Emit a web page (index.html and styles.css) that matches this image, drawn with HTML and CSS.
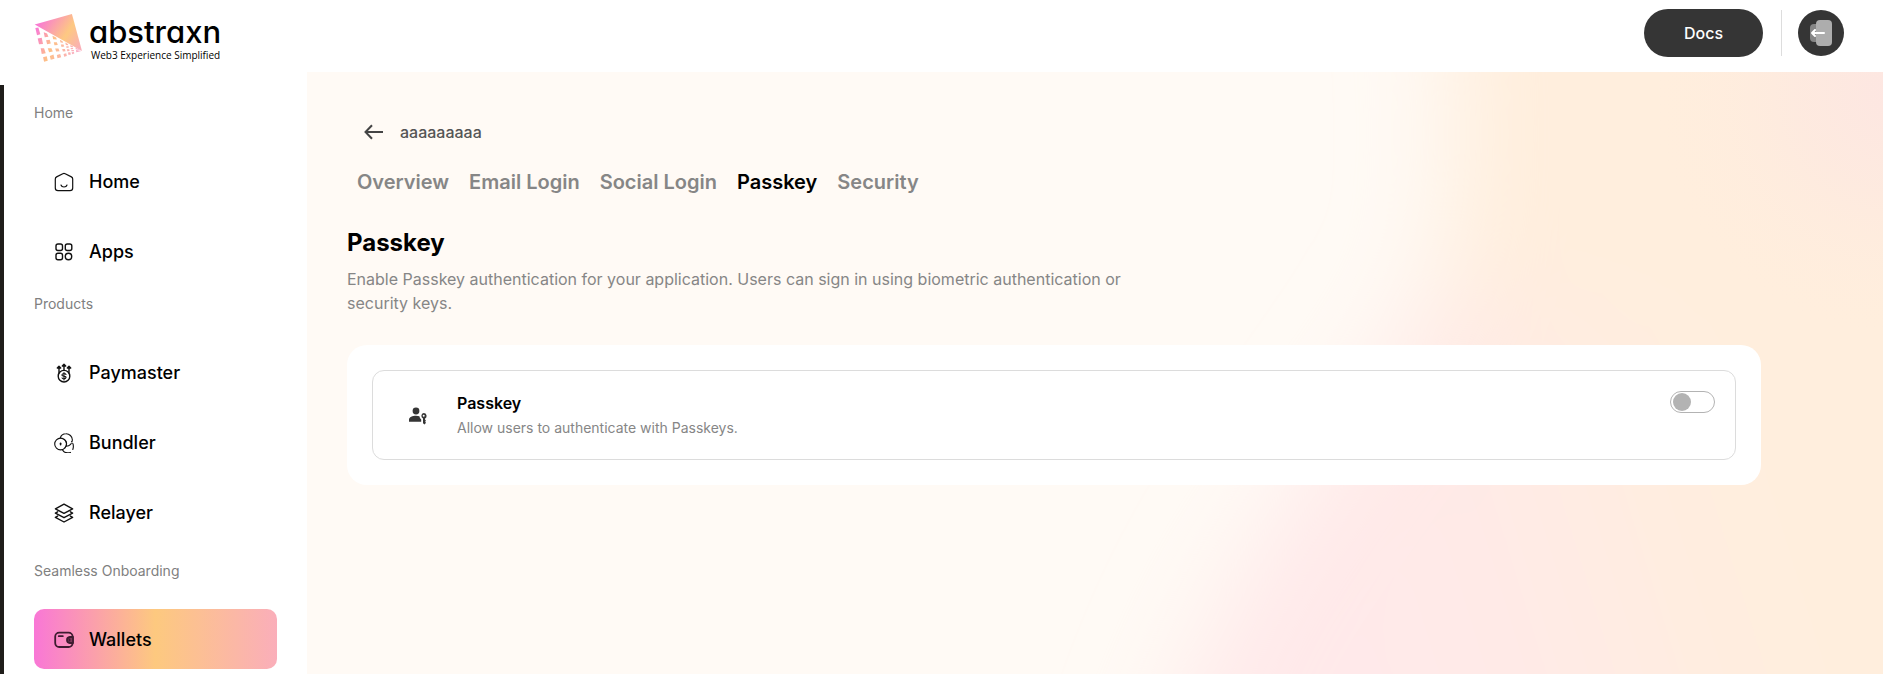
FILE: index.html
```html
<!DOCTYPE html>
<html lang="en">
<head>
    <meta charset="UTF-8">
    <meta name="viewport" content="width=device-width, initial-scale=1">
    <title>Abstraxn - Passkey</title>
    <link rel="stylesheet" href="styles.css">
</head>
<body>
<header class="header">
    <a href="#" class="logo">
        <svg class="logo-mark" viewBox="102 42 146 146" aria-hidden="true">
            <defs>
                <linearGradient id="mark-top" gradientUnits="userSpaceOnUse" x1="125" y1="60" x2="245" y2="140">
                    <stop offset="0" stop-color="#f97bd2"/>
                    <stop offset="0.6" stop-color="#fdc982"/>
                    <stop offset="1" stop-color="#faaeb8"/>
                </linearGradient>
                <linearGradient id="mark-grid" gradientUnits="userSpaceOnUse" x1="104" y1="100" x2="245" y2="150">
                    <stop offset="0" stop-color="#f97bd6"/>
                    <stop offset="0.4" stop-color="#fdc186"/>
                    <stop offset="1" stop-color="#f9a8cc"/>
                </linearGradient>
            </defs>
            <path fill="url(#mark-top)" d="M104 76 215 45l30 110z"/>
            <path fill="url(#mark-grid)" d="M106 87l9-2 6 20-10 3zM113 118l12-2 4 18-12 1zM122 147h10l5 15-12 2zM129 174l11-3 3 13-11 3zM131 99l10 4 4 10-11 1zM138 123l11-1 3 11-11 2zM143 147h11l4 10-11 2zM149 170l11-4 3 12-11 3zM157 110l11 5 2 6-11-1zM161 129h9l3 8-10 1zM165 148h10l3 8-10 1zM170 167l10-3 3 10-11 3zM179 122l8 4 2 5-8-1zM182 136h8l2 6-8 1zM186 149h8l2 7-8 1zM190 164l8-2 2 8-8 2zM195 130l8 4 1 4-7-1zM198 141h7l1 4-7 1zM200 150h7l1 5-7 1zM203 160l7-1 2 7-7 1zM210 137l8 4v3l-7-1zM211 146h7l1 3-7 1zM213 152h8v4h-7zM214 159l7-1 1 5-6 2zM226 145l15 8-15-3zM227 152l16 3-15 4z"/>
        </svg>
        <span class="logo-text">
            <span class="logo-name">abstraxn</span>
            <span class="logo-tagline">Web3 Experience Simplified</span>
        </span>
    </a>
    <div class="header-actions">
        <a href="#" class="docs-button">Docs</a>
        <span class="divider"></span>
        <button type="button" class="logout" aria-label="Log out">
            <svg width="24" height="26" viewBox="0 0 24 26" aria-hidden="true">
                <rect x="1" y="4" width="12" height="18" rx="4" fill="#858585"/>
                <rect x="7" y="0" width="16" height="26" rx="4" fill="#adadad"/>
                <path d="M15 13H3M6 10l-3 3 3 3" fill="none" stroke="#fff" stroke-width="2" stroke-linecap="round" stroke-linejoin="round"/>
            </svg>
        </button>
    </div>
</header>

<div class="layout">
    <nav class="sidebar">
        <h2 class="nav-label">Home</h2>
        <ul class="nav-list">
            <li><a href="#" class="nav-item">
                <svg class="nav-icon" viewBox="0 0 20 20" aria-hidden="true">
                    <path d="M8.8 1.7 2.6 4.9Q1.3 5.6 1.3 7v9q0 2.7 2.7 2.7h12q2.7 0 2.7-2.7V7q0-1.4-1.3-2.1l-6.2-3.2Q10 1.1 8.8 1.7zM7 13q.6 2 3 2t3-2" stroke-width="1.2"/>
                </svg>
                Home</a></li>
            <li><a href="#" class="nav-item">
                <svg class="nav-icon" viewBox="0 0 20 20" aria-hidden="true">
                    <rect x="2" y="2" width="6.5" height="6.5" rx="2"/>
                    <rect x="11.3" y="2" width="6.5" height="6.5" rx="2"/>
                    <rect x="2" y="11.3" width="6.5" height="6.5" rx="2"/>
                    <circle cx="14.5" cy="14.5" r="3.2"/>
                </svg>
                Apps</a></li>
        </ul>
        <h2 class="nav-label">Products</h2>
        <ul class="nav-list">
            <li><a href="#" class="nav-item">
                <svg class="nav-icon" viewBox="0 0 20 20" aria-hidden="true">
                    <circle cx="10" cy="13.2" r="5.8"/>
                    <path d="M10 7V2.5M5 10V4.5M15 10V4.5M3.3 5 5 3.3 6.7 5zM8.3 3 10 1.3 11.7 3zM13.3 5 15 3.3 16.7 5z"/>
                    <path d="M12 11.5q-.4-1-2-1t-2 1.2 2 1.5 2 1.5-2 1.2-2-1M10 9.5v7.5" stroke-width="1.1"/>
                </svg>
                Paymaster</a></li>
            <li><a href="#" class="nav-item">
                <svg class="nav-icon" viewBox="0 0 20 20" aria-hidden="true">
                    <g stroke-width="1.1">
                        <circle cx="6.6" cy="11" r="5.9"/>
                        <path d="M6.3 5C7 2.2 9.2.8 12 .8a6.2 6.2 0 0 1 .3 12.4M10.2 6.4c3 1.8 3 5.8.8 8.2M8.5 17c1.8 3 4.5 3.5 8 2.4M17.6 8.5c1.9 2.2 2.2 5 1.2 8"/>
                        <path d="M6.6 10.2v1.6" stroke-width="1.6"/>
                    </g>
                </svg>
                Bundler</a></li>
            <li><a href="#" class="nav-item">
                <svg class="nav-icon" viewBox="0 0 20 20" aria-hidden="true">
                    <path d="m10 1.2 8.6 4.6L10 10.4 1.4 5.8zM3.6 8.8l-2.2 1.3 8.6 4.6 8.6-4.6-2.2-1.3M3.6 13.1l-2.2 1.3 8.6 4.6 8.6-4.6-2.2-1.3"/>
                </svg>
                Relayer</a></li>
        </ul>
        <h2 class="nav-label nav-label-spaced">Seamless Onboarding</h2>
        <ul class="nav-list">
            <li><a href="#" class="nav-item active" aria-current="page">
                <svg class="nav-icon" viewBox="0 0 20 20" aria-hidden="true">
                    <g stroke="#3d1c30" stroke-width="1.8">
                        <rect x="1.2" y="2.6" width="17.4" height="14.4" rx="4"/>
                        <path d="M4.8 6.2h4"/>
                        <path d="M19 7h-3.2q-2.8.3-2.8 3t2.8 3H19z" fill="#7a3858"/>
                        <path d="M15.5 9.5v1"/>
                    </g>
                </svg>
                Wallets</a></li>
        </ul>
    </nav>

    <main class="content">
        <svg class="backdrop" viewBox="0 0 1576 602" preserveAspectRatio="none" aria-hidden="true">
            <defs>
                <filter id="soft" filterUnits="userSpaceOnUse" x="500" y="-300" width="1500" height="1300">
                    <feGaussianBlur stdDeviation="50"/>
                </filter>
                <linearGradient id="blush" gradientUnits="userSpaceOnUse" x1="1020" y1="520" x2="1540" y2="360">
                    <stop offset="0" stop-color="#ffe9ea"/>
                    <stop offset="0.35" stop-color="#feeae6"/>
                    <stop offset="1" stop-color="#ffeedd" stop-opacity="0"/>
                </linearGradient>
                <radialGradient id="corner" gradientUnits="userSpaceOnUse" cx="1590" cy="20" r="250">
                    <stop offset="0" stop-color="#fde6e2"/>
                    <stop offset="0.4" stop-color="#fde8e0" stop-opacity="0.7"/>
                    <stop offset="1" stop-color="#ffeedd" stop-opacity="0"/>
                </radialGradient>
            </defs>
            <g filter="url(#soft)">
                <path fill="#ffeedd" d="M1125-200C1155 60 1165 200 1080 310S890 500 810 850H1850V-200z"/>
                <path fill="url(#blush)" d="M1120 220C1070 340 890 480 810 850H1850V220z"/>
            </g>
            <rect x="1300" width="276" height="310" fill="url(#corner)"/>
        </svg>
        <a href="#" class="back">
            <svg width="20" height="16" viewBox="0 0 20 16" aria-hidden="true">
                <path d="M19 8H2M8 1.2 1.5 8 8 14.8" fill="none" stroke="#444" stroke-width="2"/>
            </svg>
            aaaaaaaaa
        </a>
        <nav class="tabs">
            <a href="#">Overview</a>
            <a href="#">Email Login</a>
            <a href="#">Social Login</a>
            <a href="#" class="active" aria-current="page">Passkey</a>
            <a href="#">Security</a>
        </nav>
        <h1>Passkey</h1>
        <p class="intro">Enable Passkey authentication for your application. Users can sign in using biometric authentication or security keys.</p>
        <section class="card">
            <div class="option">
                <svg class="option-icon" width="20" height="20" viewBox="0 0 20 20" aria-hidden="true">
                    <circle cx="8" cy="5" r="3.4"/>
                    <path d="M1 15.8v-2C1 11 4.5 9.8 8 9.8q2 0 3.4.5.2 2 1.8 3.2v2.3z"/>
                    <path fill-rule="evenodd" d="M15.7 7a3 3 0 0 1 1.4 5.6v1.2l.9 1-.9 1 .9 1-1.4 1.7-1.6-1.3v-4.6A3 3 0 0 1 15.7 7zm0 1.8a1 1 0 1 0 0 2 1 1 0 0 0 0-2z"/>
                </svg>
                <div class="option-text">
                    <label for="passkey-toggle">Passkey</label>
                    <p>Allow users to authenticate with Passkeys.</p>
                </div>
                <input type="checkbox" role="switch" id="passkey-toggle" class="toggle">
            </div>
        </section>
    </main>
</div>
</body>
</html>
```
FILE: styles.css
```css
* {
  box-sizing: border-box;
}

body {
  margin: 0;
  min-height: 100vh;
  display: flex;
  flex-direction: column;
  background: white;
  color: #000;
  font-family: Inter, sans-serif;
  font-size: 16px;
  line-height: 24px;
}

a {
  color: inherit;
  text-decoration: none;
}

h1, h2, p, ul {
  margin: 0;
  padding: 0;
}

.header {
  display: flex;
  justify-content: space-between;
  align-items: flex-start;
  height: 72px;
  padding: 9px 39px 0 34px;
}

.logo {
  display: flex;
  gap: 6px;
  padding-top: 4px;
}
.logo-mark {
  width: 49px;
  height: 49px;
}
.logo-text {
  display: flex;
  flex-direction: column;
  padding-top: 2px;
}
.logo-name {
  font-size: 31px;
  font-weight: 500;
  line-height: 34px;
  font-feature-settings: "cv11";
}
.logo-tagline {
  padding-left: 2px;
  font-family: "Open Sans", sans-serif;
  font-size: 10px;
  font-weight: 500;
  line-height: 12px;
}

.header-actions {
  display: flex;
  align-items: center;
}
.docs-button {
  padding: 12px 40px;
  border-radius: 24px;
  background: #353535;
  color: white;
  font-weight: 500;
}
.divider {
  width: 1px;
  height: 46px;
  margin: 0 16px 0 18px;
  background: #ddd;
}
.logout {
  display: flex;
  align-items: center;
  justify-content: center;
  width: 46px;
  height: 46px;
  padding: 0;
  border: 0;
  border-radius: 50%;
  background: #353535;
  cursor: pointer;
}

.layout {
  flex: 1;
  display: flex;
}

.sidebar {
  flex: 0 0 307px;
  margin-top: 13px;
  padding: 18px 30px 0;
  border-left: 4px solid #1f1d1a;
}
.nav-label {
  color: #808080;
  font-size: 14px;
  font-weight: 400;
  line-height: 20px;
  margin: 13px 0 28px;
}
.nav-label:first-child {
  margin-top: 0;
}
.nav-label-spaced {
  margin-top: 19px;
}
.nav-list {
  display: flex;
  flex-direction: column;
  gap: 10px;
  list-style: none;
}
.nav-item {
  display: flex;
  align-items: center;
  gap: 15px;
  height: 60px;
  padding: 1px 20px 0;
  border-radius: 10px;
  font-size: 18px;
  font-weight: 500;
}
.nav-item.active {
  background: linear-gradient(90deg, #f977d6, #fdc97f 50%, #faaeba);
}
.nav-icon {
  width: 20px;
  height: 20px;
  fill: none;
  stroke: #111;
  stroke-width: 1.4;
  stroke-linecap: round;
  stroke-linejoin: round;
}

.content {
  position: relative;
  z-index: 0;
  flex: 1;
  min-width: 0;
  padding: 48px 122px 40px 40px;
  background: #fffaf5;
}
.backdrop {
  position: absolute;
  inset: 0;
  z-index: -1;
  width: 100%;
  height: 100%;
}

.back {
  display: flex;
  align-items: center;
  gap: 16px;
  width: fit-content;
  padding-left: 17px;
  color: #555;
  font-weight: 500;
}
.tabs {
  display: flex;
  gap: 20px;
  margin-top: 26px;
  padding-left: 10px;
  color: #868686;
  font-size: 20px;
  font-weight: 600;
}
.tabs .active {
  color: #000;
}

h1 {
  margin-top: 34px;
  font-size: 24px;
  font-weight: 700;
  line-height: 30px;
}
.intro {
  max-width: 800px;
  margin-top: 9px;
  color: #868686;
}

.card {
  margin-top: 30px;
  padding: 25px;
  border-radius: 20px;
  background: white;
}
.option {
  display: flex;
  align-items: flex-start;
  min-height: 90px;
  padding: 20px 20px 19px;
  border: 1px solid #dcdcdc;
  border-radius: 12px;
}
.option-icon {
  align-self: center;
  margin: 0 29px 0 15px;
  fill: #353535;
}
.option-text {
  flex: 1;
}
.option-text label {
  font-weight: 600;
}
.option-text p {
  margin-top: 1px;
  color: #868686;
  font-size: 14px;
}

.toggle {
  appearance: none;
  display: flex;
  align-items: center;
  width: 45px;
  height: 22px;
  margin: 0;
  padding: 0 2px;
  border: 1px solid #b3b3b3;
  border-radius: 11px;
  background: white;
  cursor: pointer;
}
.toggle::before {
  content: "";
  width: 18px;
  height: 18px;
  border-radius: 50%;
  background: #b3b3b3;
}
.toggle:checked {
  justify-content: flex-end;
}
```
